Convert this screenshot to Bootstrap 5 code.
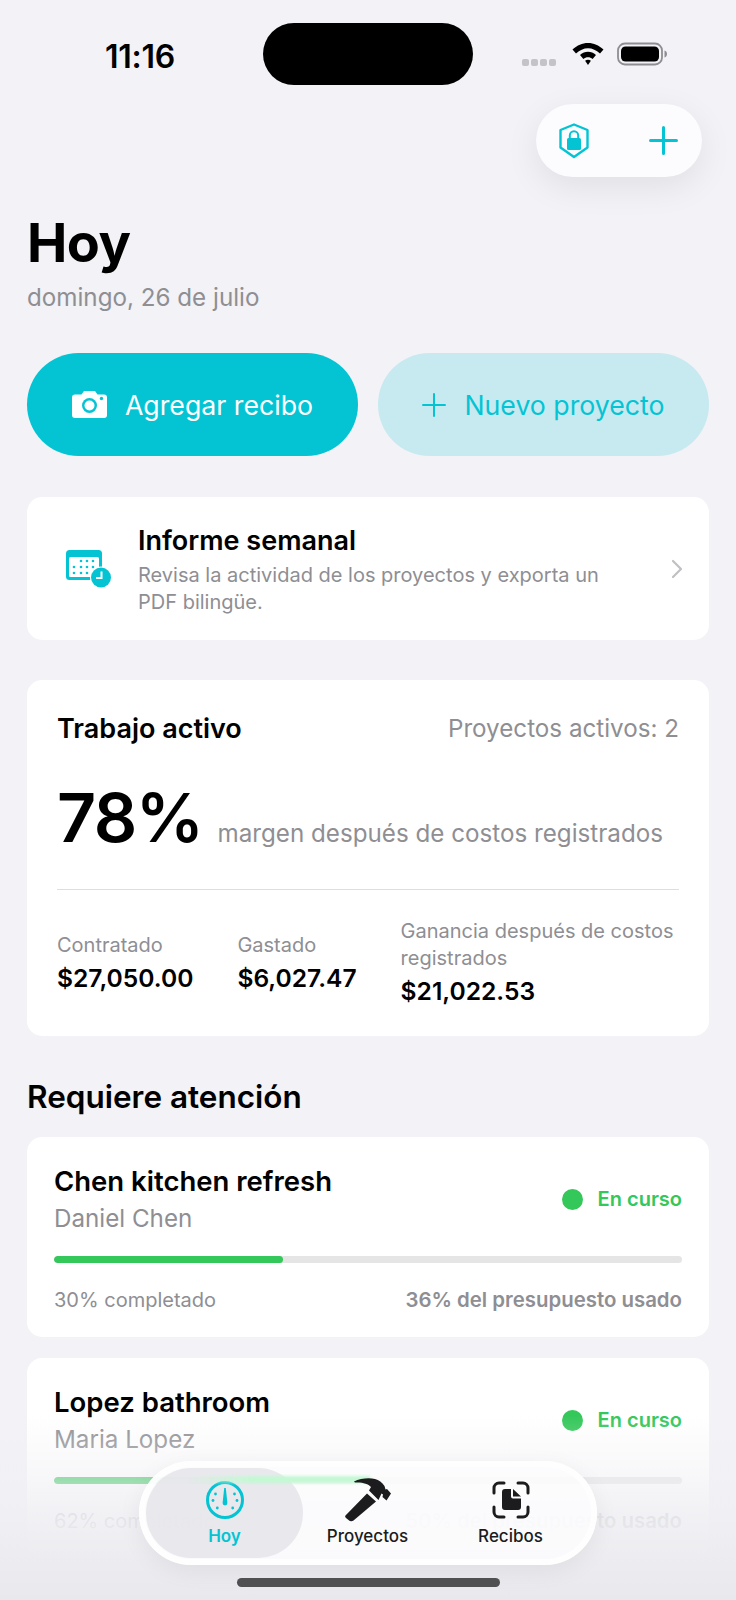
<!DOCTYPE html>
<html lang="es">
<head>
    <meta charset="UTF-8">
    <meta name="viewport" content="width=device-width, initial-scale=1.0">
    <title>Hoy</title>
    <link href="https://cdn.jsdelivr.net/npm/bootstrap@5.3.0/dist/css/bootstrap.min.css" rel="stylesheet">
    <style>
        html, body {
            height: 1600px;
            overflow: hidden;
        }
        body {
            font-family: Inter, "Liberation Sans", sans-serif;
            background-color: #f2f2f7;
            color: #000;
        }
        .screen {
            position: relative;
            height: 1600px;
            overflow: hidden;
            padding: 0 27px;
        }
        .status-row {
            height: 85px;
            padding-top: 23px;
            margin: 0 -27px;
        }
        .status-time {
            width: 263px;
            text-align: center;
            padding: 3px 0 0 17px;
            font-size: 32px;
            font-weight: 600;
            line-height: 62px;
            letter-spacing: -.3px;
        }
        .island {
            width: 210px;
            height: 62px;
            background: #000;
            border-radius: 31px;
        }
        .status-icons {
            padding-left: 49px;
            height: 62px;
        }
        .signal-dot {
            width: 7px;
            height: 7px;
            border-radius: 2px;
            background: #c4c4c8;
            margin-right: 2px;
            margin-top: 16px;
        }
        .pill-actions {
            width: 166px;
            height: 73px;
            margin: 19px 7px 0 auto;
            border-radius: 37px;
            background: #fcfcfe;
            box-shadow: 0 10px 34px rgba(0, 0, 0, .08);
            padding: 0 24px 0 23px;
        }
        .page-title {
            font-size: 54px;
            font-weight: 700;
            line-height: 64px;
            margin: 34px 0 0;
            letter-spacing: -.5px;
        }
        .page-date {
            font-size: 24.200px;
            line-height: 30px;
            color: #8e8e93;
            margin-top: 8px;
        }
        .action-btn {
            flex: 1 1 0;
            height: 103px;
            border-radius: 52px;
            border: 0;
            font-size: 26.700px;
            font-weight: 400;
            gap: 18px;
            padding-top: 7px;
        }
        .action-btn svg {
            margin-top: -1px;
        }
        .action-main {
            background: #04c4d4;
            color: #fff;
        }
        .action-soft {
            background: #c7e9f0;
            color: #04c4d4;
        }
        .action-row {
            margin-top: 40px;
            gap: 20px;
        }
        .sheet {
            border: 0;
            border-radius: 15px;
            background: #fff;
        }
        .report-sheet {
            height: 143px;
            margin-top: 41px;
            padding: 0 26px 0 39px;
        }
        .report-body {
            margin-left: 26px;
            padding-top: 3px;
        }
        .report-title {
            font-size: 27px;
            font-weight: 600;
            line-height: 32px;
        }
        .report-text {
            font-size: 20px;
            line-height: 27px;
            color: #8e8e93;
            margin-top: 5px;
        }
        .active-sheet {
            height: 356px;
            margin-top: 40px;
            padding: 31px 30px 0;
        }
        .active-head {
            font-size: 27px;
            font-weight: 600;
            line-height: 34px;
        }
        .active-count {
            font-size: 24.200px;
            color: #8e8e93;
        }
        .big-row {
            margin-top: 30px;
        }
        .big-percent {
            font-size: 68px;
            font-weight: 600;
            line-height: 80px;
            letter-spacing: -1.500px;
            white-space: nowrap;
        }
        .big-caption {
            font-size: 24.200px;
            color: #8e8e93;
            margin-left: 15px;
            white-space: nowrap;
        }
        .stat-line {
            border-top: 1px solid #dedee0;
            margin-top: 32px;
            padding-top: 28px;
            gap: 44px;
        }
        .stat-label {
            font-size: 20px;
            line-height: 27px;
            color: #8e8e93;
        }
        .stat-value {
            font-size: 24.600px;
            font-weight: 600;
            line-height: 32px;
            margin-top: 3px;
        }
        .section-title {
            font-size: 31.500px;
            font-weight: 600;
            line-height: 40px;
            margin: 41px 0 20px;
        }
        .job-sheet {
            height: 200px;
            margin-bottom: 21px;
            padding: 26px 27px 0;
        }
        .job-name {
            font-size: 27.500px;
            font-weight: 600;
            line-height: 36px;
        }
        .job-client {
            font-size: 24.200px;
            line-height: 32px;
            color: #8e8e93;
            margin-top: 4px;
        }
        .job-state {
            font-size: 20px;
            font-weight: 600;
            color: #34c759;
            gap: 15px;
        }
        .state-dot {
            width: 21px;
            height: 21px;
            border-radius: 50%;
            background: #34c759;
        }
        .job-bar {
            height: 7px;
            border-radius: 4px;
            background: #e5e5e5;
            margin-top: 21px;
        }
        .job-bar .progress-bar {
            background: #34c759;
            border-radius: 4px;
        }
        .job-foot {
            font-size: 20px;
            line-height: 26px;
            color: #8e8e93;
            margin-top: 24px;
        }
        .job-foot b {
            font-weight: 600;
            font-size: 20.400px;
        }
        .bottom-fade {
            position: absolute;
            left: 0;
            right: 0;
            bottom: 0;
            height: 185px;
            background: linear-gradient(to bottom, rgba(240, 240, 244, 0), rgba(240, 240, 244, .5) 33%, rgba(240, 240, 244, .85) 50%, rgba(238, 238, 242, .96) 67%, #e9e9ed 100%);
        }
        .tab-dock {
            position: absolute;
            left: 139px;
            top: 1461px;
            width: 458px;
            height: 104px;
            border-radius: 52px;
            background: rgba(253, 253, 254, .84);
            box-shadow: inset 0 0 0 6px rgba(255, 255, 255, .7), 0 6px 24px rgba(0, 0, 0, .06);
            padding: 7px 7px 7px 14px;
        }
        .dock-glow {
            position: absolute;
            left: 50px;
            top: 15px;
            width: 181px;
            height: 7px;
            filter: blur(1.500px);
            background: linear-gradient(to right, rgba(190, 246, 208, 0), #c4f8d4 35%, #c4f8d4 100%);
        }
        .tab-item {
            position: relative;
            width: 143px;
            height: 90px;
            font-size: 17px;
            font-weight: 500;
            color: #1c1c1e;
            line-height: 20px;
            padding-top: 10px;
        }
        .tab-item svg {
            height: 44px;
            margin-bottom: 4px;
        }
        .tab-active {
            width: 157px;
            margin: 0 -7px;
            border-radius: 45px;
            background: rgba(228, 228, 232, .8);
            color: #04c4d4;
            font-weight: 600;
        }
        .home-bar {
            position: absolute;
            left: 237px;
            top: 1578px;
            width: 263px;
            height: 9px;
            border-radius: 5px;
            background: #505053;
        }
    </style>
</head>
<body>
    <div class="screen">
        <!-- status bar -->
        <div class="status-row d-flex">
            <div class="status-time">11:16</div>
            <div class="island"></div>
            <div class="status-icons d-flex align-items-center">
                <span class="signal-dot"></span><span class="signal-dot"></span><span class="signal-dot"></span><span class="signal-dot"></span>
                <svg style="margin-left: 14px" width="32" height="24" viewBox="0 0 32 24"><path d="M16 1C10 1 5.500 3.200 .5 7.500L4 11.500C7.800 8.300 11.500 6.300 16 6.300s8.200 2 12 5.200l3.500-4C26.500 3.200 22 1 16 1zM16 9.800c-3 0-5.500 1.100-8 3.200l3.400 3.900c1.400-1.100 2.800-1.700 4.600-1.700s3.200.6 4.600 1.700L24 13c-2.500-2.100-5-3.200-8-3.200zM16 17.800c-1.100 0-2 .4-2.900 1L16 23l2.900-4.200c-.9-.6-1.800-1-2.900-1z" fill="#000"/></svg>
                <svg style="margin-left: 13px" width="52" height="24" viewBox="0 0 52 24"><rect x="1" y="1.500" width="44" height="21" rx="7" fill="none" stroke="#8e8e92" stroke-width="1.800"/><rect x="4" y="4.500" width="38" height="15" rx="4.500" fill="#000"/><path d="M47.500 8.500v7c1.600-.5 2.500-1.900 2.500-3.500s-.9-3-2.500-3.500z" fill="#8e8e92"/></svg>
            </div>
        </div>

        <div class="pill-actions d-flex justify-content-between align-items-center">
            <svg width="30" height="36" viewBox="0 0 30 36"><path d="M15 1.500 28.500 7v17.500L15 34 1.500 24.500V7z" fill="none" stroke="#04c4d4" stroke-width="2.400" stroke-linejoin="round"/><rect x="8" y="15" width="14" height="12" rx="1.500" fill="#04c4d4"/><path d="M10.800 15v-2.500a4.200 4.200 0 0 1 8.400 0V15" fill="none" stroke="#04c4d4" stroke-width="2"/></svg>
            <svg width="29" height="29" viewBox="0 0 29 29"><path d="M14.500 1.500v26M1.500 14.500h26" stroke="#04c4d4" stroke-width="3" stroke-linecap="round"/></svg>
        </div>

        <h1 class="page-title">Hoy</h1>
        <div class="page-date">domingo, 26 de julio</div>

        <div class="action-row d-flex">
            <button class="btn action-btn action-main d-flex align-items-center justify-content-center" type="button">
                <svg width="35" height="27" viewBox="0 0 35 27"><path d="M12 0h11l2.500 3.500H32a3 3 0 0 1 3 3V24a3 3 0 0 1-3 3H3a3 3 0 0 1-3-3V6.500a3 3 0 0 1 3-3h6.500z" fill="#fff"/><circle cx="17.500" cy="14.500" r="7.500" fill="#04c4d4"/><circle cx="17.500" cy="14.500" r="5" fill="#fff"/><circle cx="29.500" cy="7.500" r="1.700" fill="#04c4d4"/></svg>
                Agregar recibo
            </button>
            <button class="btn action-btn action-soft d-flex align-items-center justify-content-center" type="button">
                <svg width="24" height="24" viewBox="0 0 24 24"><path d="M12 1v22M1 12h22" stroke="#04c4d4" stroke-width="2" stroke-linecap="round"/></svg>
                Nuevo proyecto
            </button>
        </div>

        <div class="card sheet report-sheet flex-row align-items-center">
            <svg class="flex-shrink-0" width="46" height="38" viewBox="0 0 46 38"><rect x="0" y="0" width="36" height="30" rx="3.500" fill="#04c4d4"/><rect x="3" y="7" width="30" height="20" rx="1.500" fill="#fff"/><g fill="#04c4d4"><circle cx="15" cy="11" r="1.300"/><circle cx="21" cy="11" r="1.300"/><circle cx="27" cy="11" r="1.300"/><circle cx="8" cy="17" r="1.300"/><circle cx="15" cy="17" r="1.300"/><circle cx="21" cy="17" r="1.300"/><circle cx="27" cy="17" r="1.300"/><circle cx="8" cy="23" r="1.300"/><circle cx="15" cy="23" r="1.300"/><circle cx="21" cy="23" r="1.300"/></g><circle cx="35" cy="27.500" r="11" fill="#fff"/><circle cx="35" cy="27.500" r="10" fill="#04c4d4"/><path d="M35.500 21.500v6.500H30" fill="none" stroke="#fff" stroke-width="2"/></svg>
            <div class="report-body flex-grow-1">
                <div class="report-title">Informe semanal</div>
                <div class="report-text">Revisa la actividad de los proyectos y exporta un<br>PDF bilingüe.</div>
            </div>
            <svg class="flex-shrink-0" width="12" height="20" viewBox="0 0 12 20"><path d="M2 2l8 8-8 8" fill="none" stroke="#c0c0c4" stroke-width="2.200" stroke-linecap="round" stroke-linejoin="round"/></svg>
        </div>

        <div class="card sheet active-sheet">
            <div class="d-flex justify-content-between align-items-center">
                <div class="active-head">Trabajo activo</div>
                <div class="active-count">Proyectos activos: 2</div>
            </div>
            <div class="big-row d-flex align-items-baseline">
                <div class="big-percent">78%</div>
                <div class="big-caption">margen después de costos registrados</div>
            </div>
            <div class="stat-line d-flex align-items-center">
                <div class="flex-shrink-0">
                    <div class="stat-label">Contratado</div>
                    <div class="stat-value">$27,050.00</div>
                </div>
                <div class="flex-shrink-0">
                    <div class="stat-label">Gastado</div>
                    <div class="stat-value">$6,027.47</div>
                </div>
                <div>
                    <div class="stat-label">Ganancia después de costos<br>registrados</div>
                    <div class="stat-value">$21,022.53</div>
                </div>
            </div>
        </div>

        <h2 class="section-title">Requiere atención</h2>

        <div class="card sheet job-sheet">
            <div class="d-flex justify-content-between align-items-center">
                <div>
                    <div class="job-name">Chen kitchen refresh</div>
                    <div class="job-client">Daniel Chen</div>
                </div>
                <div class="job-state d-flex align-items-center"><span class="state-dot"></span>En curso</div>
            </div>
            <div class="progress job-bar"><div class="progress-bar" style="width: 36.500%"></div></div>
            <div class="job-foot d-flex justify-content-between"><span>30% completado</span><b>36% del presupuesto usado</b></div>
        </div>

        <div class="card sheet job-sheet">
            <div class="d-flex justify-content-between align-items-center">
                <div>
                    <div class="job-name">Lopez bathroom</div>
                    <div class="job-client">Maria Lopez</div>
                </div>
                <div class="job-state d-flex align-items-center"><span class="state-dot"></span>En curso</div>
            </div>
            <div class="progress job-bar"><div class="progress-bar" style="width: 50%"></div></div>
            <div class="job-foot d-flex justify-content-between"><span>62% completado</span><b>50% del presupuesto usado</b></div>
        </div>

        <div class="bottom-fade"></div>

        <nav class="tab-dock d-flex">
            <div class="tab-item tab-active d-flex flex-column align-items-center">
                <svg width="42" height="44" viewBox="0 0 42 44"><circle cx="21" cy="22" r="17.500" fill="none" stroke="#04c4d4" stroke-width="3"/><path d="M20.200 10h1.600l1.600 15a2.400 2.400 0 0 1-4.800 0z" fill="#04c4d4"/><g fill="#04c4d4"><circle cx="11.500" cy="16" r="1.400"/><circle cx="30.500" cy="16" r="1.400"/><circle cx="9" cy="22.500" r="1.400"/><circle cx="33" cy="22.500" r="1.400"/><circle cx="13.300" cy="30" r="1.400"/><circle cx="28.700" cy="30" r="1.400"/></g></svg>
                Hoy
            </div>
            <div class="dock-glow"></div>
            <div class="tab-item d-flex flex-column align-items-center">
                <svg width="48" height="44" viewBox="0 0 48 44"><path d="M1.500 37.500 23 15.500l9 8L9.500 42.500c-1.500 1-3.500 1-5-.5L2 40c-1-.8-1-1.800-.5-2.500z" fill="#1c1c1e"/><path d="M10 3.500C16 .5 25-.5 31 1c4 1 7 3.500 9.500 7l1 3.500 1.500-.5 4 4.500-4.500 7-4-3.500.5-2.500-1.500-1-3 6.500-9.500-9.500 2-3.500c-3-3.500-9-5-16-4.500-.8-.3-1-1-.5-1.500z" fill="#1c1c1e"/></svg>
                Proyectos
            </div>
            <div class="tab-item d-flex flex-column align-items-center">
                <svg width="38" height="44" viewBox="0 0 38 38"><path d="M2 12V7a5 5 0 0 1 5-5h5M26 2h5a5 5 0 0 1 5 5v5M36 26v5a5 5 0 0 1-5 5h-5M12 36H7a5 5 0 0 1-5-5v-5" fill="none" stroke="#1c1c1e" stroke-width="3" stroke-linecap="round"/><path d="M13 8h6v7.500a2 2 0 0 0 2 2h8V26a3 3 0 0 1-3 3H13a3 3 0 0 1-3-3V11a3 3 0 0 1 3-3zM21 8l8 7.500h-8z" fill="#1c1c1e"/></svg>
                Recibos
            </div>
        </nav>
        <div class="home-bar"></div>
    </div>
    <script src="https://cdn.jsdelivr.net/npm/bootstrap@5.3.0/dist/js/bootstrap.bundle.min.js"></script>
</body>
</html>
